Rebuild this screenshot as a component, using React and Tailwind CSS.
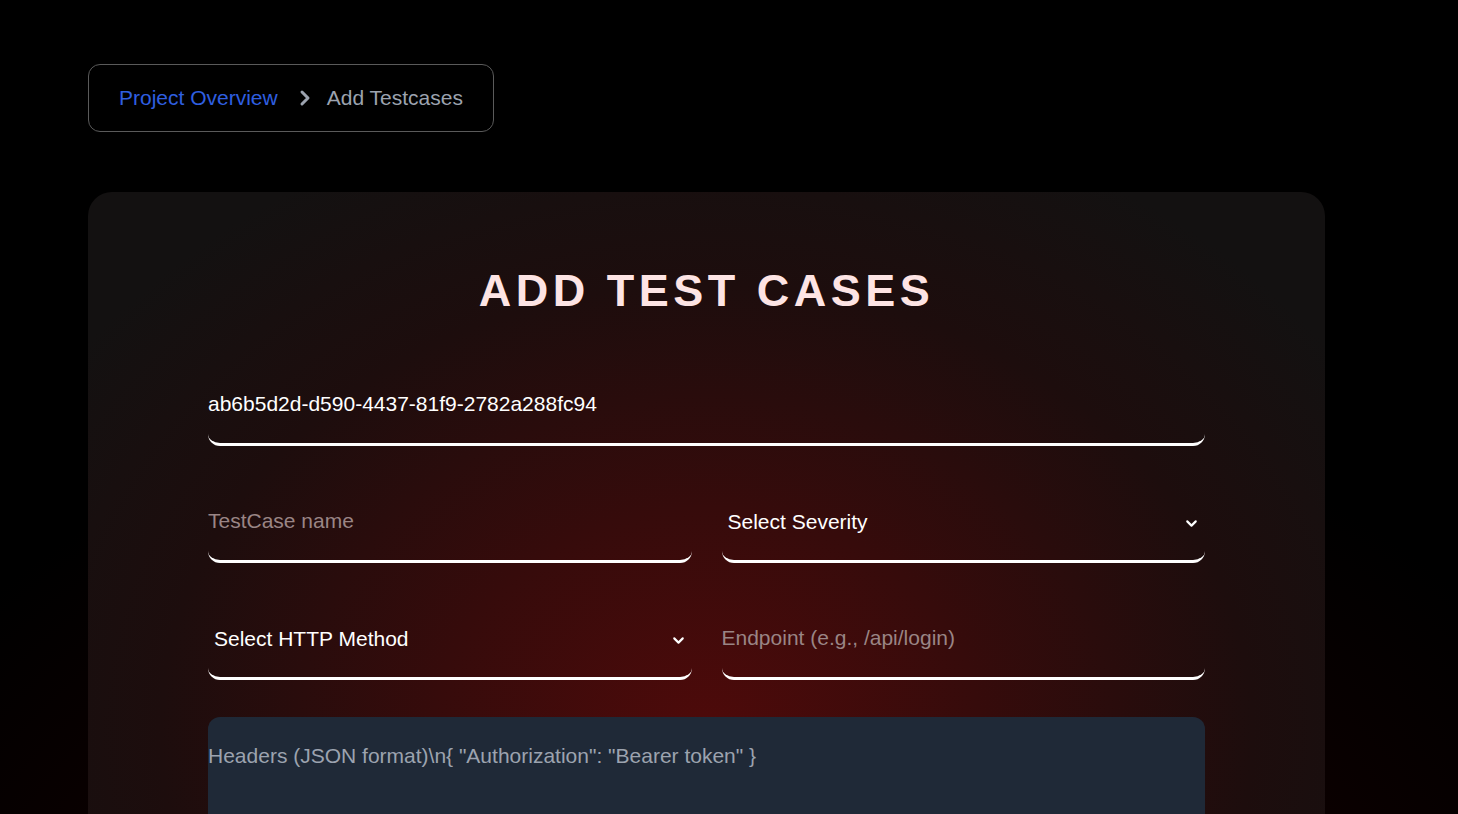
import React, { useState } from 'react';

const Chevron = ({ className = '' }) => (
    <svg viewBox="0 0 24 24" fill="none" stroke="currentColor" strokeWidth="3" strokeLinecap="round" strokeLinejoin="round" className={className}>
        <path d="M6 9l6 6 6-6" />
    </svg>
);

const fieldBase =
    'w-full h-[82px] bg-transparent border-0 border-b-[3px] border-white rounded-xl outline-none text-[21px] text-white placeholder:text-[#9a8585]';

const SelectField = ({ value, onChange, placeholder, options }) => (
    <div className="relative">
        <select
            value={value}
            onChange={onChange}
            className={`${fieldBase} appearance-none pl-[6px] pr-10 pt-[3px] font-medium cursor-pointer`}
        >
            <option value="" className="bg-gray-900">{placeholder}</option>
            {options.map((o) => (
                <option key={o} value={o} className="bg-gray-900">{o}</option>
            ))}
        </select>
        <Chevron className="absolute right-[5px] top-[34px] w-[17px] h-[17px] text-white pointer-events-none" />
    </div>
);

const App = () => {
    const [projectId, setProjectId] = useState('ab6b5d2d-d590-4437-81f9-2782a288fc94');
    const [name, setName] = useState('');
    const [severity, setSeverity] = useState('');
    const [method, setMethod] = useState('');
    const [endpoint, setEndpoint] = useState('');
    const [headers, setHeaders] = useState('');
    const [body, setBody] = useState('');

    return (
        <div
            className="min-h-screen bg-black bg-[radial-gradient(ellipse_1000px_760px_at_50%_85%,#220303_0%,#0e0000_60%,#000000_100%)] pt-16 pb-20"
            style={{ fontFamily: '"Liberation Sans", Arial, sans-serif' }}
        >
            <nav className="ml-[88px] inline-flex items-center border border-[#5a5a5a] rounded-xl bg-black/60 pl-[30px] pr-[30px] py-[19px] text-[21px] leading-7">
                <a href="#" className="text-[#2f5fe0]">Project Overview</a>
                <svg viewBox="0 0 12 18" fill="none" stroke="currentColor" strokeWidth="3" strokeLinecap="round" strokeLinejoin="round" className="w-[12px] h-[18px] ml-[21px] mr-[16px] text-[#9ca3af]">
                    <path d="M3 3l6 6-6 6" />
                </svg>
                <span className="text-[#9ca3af]">Add Testcases</span>
            </nav>

            <div className="ml-[88px] mt-[60px] w-[1237px] rounded-3xl bg-[#121111] bg-[radial-gradient(ellipse_780px_640px_at_50%_540px,#4e0a0a_0%,#360b0b_35%,#1d0d0d_70%,#131111_100%)] px-[120px] pt-[76px] pb-[80px]">
                <h1 className="text-center text-[45px] leading-none font-bold tracking-[0.1em] text-[#fde4e4]">
                    ADD TEST CASES
                </h1>

                <form className="mt-[51px] flex flex-col gap-[35px]" onSubmit={(e) => e.preventDefault()}>
                    <input
                        type="text"
                        value={projectId}
                        onChange={(e) => setProjectId(e.target.value)}
                        className={fieldBase}
                    />

                    <div className="grid grid-cols-2 gap-[30px]">
                        <input
                            type="text"
                            value={name}
                            onChange={(e) => setName(e.target.value)}
                            placeholder="TestCase name"
                            className={fieldBase}
                        />
                        <SelectField
                            value={severity}
                            onChange={(e) => setSeverity(e.target.value)}
                            placeholder="Select Severity"
                            options={['Low', 'Medium', 'High', 'Critical']}
                        />
                    </div>

                    <div className="grid grid-cols-2 gap-[30px]">
                        <SelectField
                            value={method}
                            onChange={(e) => setMethod(e.target.value)}
                            placeholder="Select HTTP Method"
                            options={['GET', 'POST', 'PUT', 'PATCH', 'DELETE']}
                        />
                        <input
                            type="text"
                            value={endpoint}
                            onChange={(e) => setEndpoint(e.target.value)}
                            placeholder="Endpoint (e.g., /api/login)"
                            className={fieldBase}
                        />
                    </div>

                    <textarea
                        value={headers}
                        onChange={(e) => setHeaders(e.target.value)}
                        placeholder={'Headers (JSON format)\\n{ "Authorization": "Bearer token" }'}
                        className="mt-[2px] w-full h-[150px] resize-none rounded-xl bg-[#1f2937] pt-[25px] px-0 text-[21px] leading-7 text-white placeholder:text-[#9ca3af] outline-none"
                    />

                    <textarea
                        value={body}
                        onChange={(e) => setBody(e.target.value)}
                        placeholder="Request Body (JSON format)"
                        className="w-full h-[150px] resize-none rounded-xl bg-[#1f2937] pt-[25px] px-0 text-[21px] leading-7 text-white placeholder:text-[#9ca3af] outline-none"
                    />

                    <button
                        type="submit"
                        className="self-center bg-red-700 text-white text-[21px] px-10 py-3 rounded-xl hover:bg-red-800"
                    >
                        Add Test Case
                    </button>
                </form>
            </div>
        </div>
    );
};

export default App;
